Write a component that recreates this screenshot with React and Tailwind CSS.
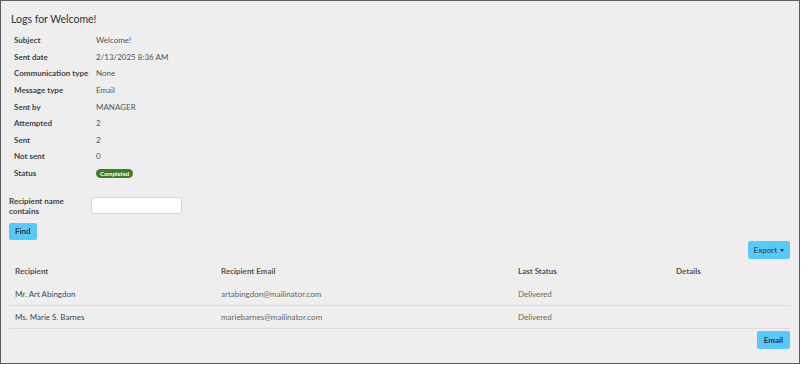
const details = [
  ["Subject", "Welcome!"],
  ["Sent date", "2/13/2025 8:36 AM"],
  ["Communication type", "None"],
  ["Message type", "Email"],
  ["Sent by", "MANAGER"],
  ["Attempted", "2"],
  ["Sent", "2"],
  ["Not sent", "0"],
];

const recipients = [
  { name: "Mr. Art Abingdon", email: "artabingdon@mailinator.com", status: "Delivered" },
  { name: "Ms. Marie S. Barnes", email: "mariebarnes@mailinator.com", status: "Delivered" },
];

export default function App() {
  return (
    <div className="w-[801px] h-[365px] bg-white font-['Lato',sans-serif]">
      <div className="w-[800px] h-[364px] border border-[#5c5c5c] bg-[#eeeeee] px-[8px] pt-[10px] flex flex-col">
        <h1 className="text-[10.5px] text-[#333] leading-[16px] pl-[2px]">Logs for Welcome!</h1>

        <div className="mt-[5px] pl-[5px] flex flex-col">
          {details.map(([label, value]) => (
            <div key={label} className="flex h-[16.6px] items-center text-[8px] whitespace-nowrap">
              <span className="w-[82px] font-bold text-[#444]">{label}</span>
              <span className="text-[#555]">{value}</span>
            </div>
          ))}
          <div className="flex h-[16.6px] items-center text-[8px]">
            <span className="w-[82px] font-bold text-[#444]">Status</span>
            <span className="bg-[#3f7d2c] text-white text-[6px] font-bold rounded-full px-[4px] leading-[9px]">
              Completed
            </span>
          </div>
        </div>

        <div className="mt-[14px] flex items-start">
          <label className="w-[82px] text-[8px] font-bold text-[#444] leading-[10px] pt-[1px]">
            Recipient name contains
          </label>
          <input className="mt-[2px] w-[91px] h-[17px] bg-white border border-[#d6d6d6] rounded-[3px]" />
        </div>
        <div>
          <button className="h-[17px] px-[6px] bg-[#5ac8f8] rounded-[2px] text-[8px] font-bold text-[#1e3a4a]">
            Find
          </button>
        </div>

        <div className="flex justify-end mt-[1px] pr-[1px]">
          <button className="h-[18px] px-[6px] bg-[#5ac8f8] rounded-[2px] text-[8px] text-[#1e3a4a] flex items-center gap-[3px]">
            Export
            <span className="inline-block w-0 h-0 border-l-[2.5px] border-r-[2.5px] border-t-[3px] border-l-transparent border-r-transparent border-t-[#1e3a4a]" />
          </button>
        </div>

        <div className="mr-[1px] text-[8px]">
          <div className="flex h-[24px] items-center font-bold text-[#555]">
            <span className="w-[212px] pl-[6px]">Recipient</span>
            <span className="w-[297px]">Recipient Email</span>
            <span className="w-[158px]">Last Status</span>
            <span>Details</span>
          </div>
          {recipients.map((r) => (
            <div key={r.email} className="flex h-[23px] items-center border-b-[1.5px] border-[#dcdcdc]">
              <span className="w-[212px] pl-[6px] text-[#2e4e63]">{r.name}</span>
              <span className="w-[297px] text-[#666]">{r.email}</span>
              <span className="w-[158px] text-[#666]">{r.status}</span>
              <span />
            </div>
          ))}
        </div>

        <div className="flex justify-end mt-[2px] pr-[1px]">
          <button className="h-[18px] px-[7px] bg-[#5ac8f8] rounded-[2px] text-[8px] font-bold text-[#1e3a4a]">
            Email
          </button>
        </div>
      </div>
    </div>
  );
}
